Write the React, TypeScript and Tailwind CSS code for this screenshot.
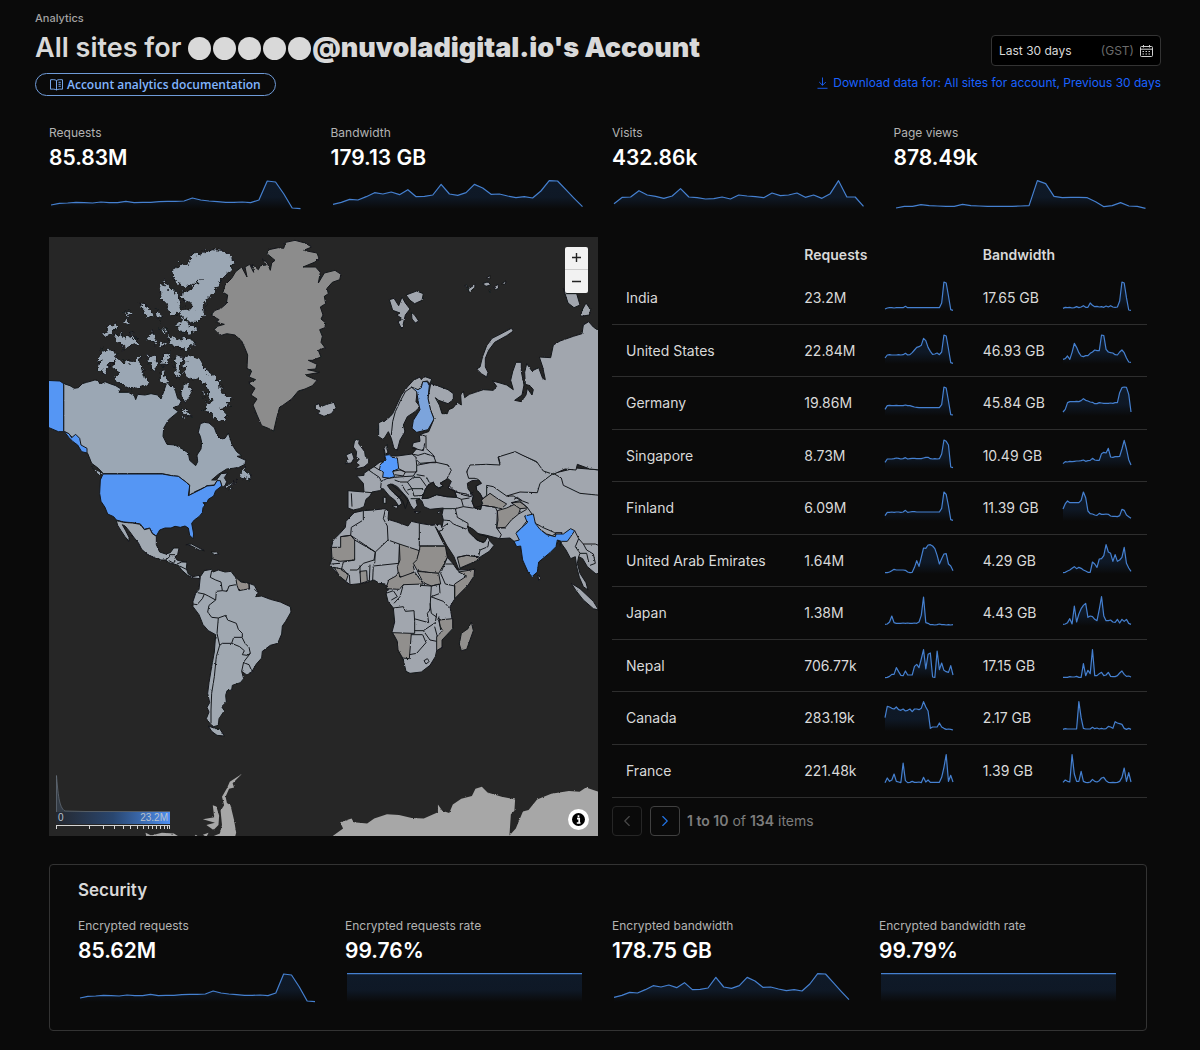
import { ChevronLeft, ChevronRight } from 'lucide-react';
import { useId } from 'react';
import type React from 'react';

interface Metric {
  label: string;
  value: string;
  points: number[];
}

interface CountryRow {
  name: string;
  requests: string;
  requestPoints: number[];
  bandwidth: string;
  bandwidthPoints: number[];
}

const REQUESTS = [12, 17, 18, 20, 19, 18, 21, 19, 19, 23, 19, 20, 20, 22, 23, 23, 24, 33, 27, 24, 22, 20, 20, 21, 19, 27, 84, 81, 45, 3, 1];
const BANDWIDTH = [14, 20, 29, 27, 37, 49, 45, 51, 43, 58, 37, 38, 42, 74, 45, 41, 49, 74, 63, 44, 45, 39, 34, 37, 33, 54, 85, 84, 58, 32, 7];
const VISITS = [16, 35, 36, 55, 42, 38, 32, 39, 61, 36, 34, 30, 31, 36, 30, 42, 39, 37, 34, 48, 40, 42, 48, 35, 42, 32, 46, 85, 36, 36, 8];
const PAGE_VIEWS = [3, 8, 8, 13, 10, 9, 8, 8, 14, 10, 9, 8, 8, 8, 8, 9, 10, 85, 76, 38, 34, 35, 35, 34, 22, 7, 10, 19, 9, 8, 2];
const RATE = Array.from({ length: 31 }, () => 85);

const SUMMARY: Metric[] = [
  { label: 'Requests', value: '85.83M', points: REQUESTS },
  { label: 'Bandwidth', value: '179.13 GB', points: BANDWIDTH },
  { label: 'Visits', value: '432.86k', points: VISITS },
  { label: 'Page views', value: '878.49k', points: PAGE_VIEWS },
];

const SECURITY: Metric[] = [
  { label: 'Encrypted requests', value: '85.62M', points: REQUESTS },
  { label: 'Encrypted requests rate', value: '99.76%', points: RATE },
  { label: 'Encrypted bandwidth', value: '178.75 GB', points: BANDWIDTH },
  { label: 'Encrypted bandwidth rate', value: '99.79%', points: RATE },
];

const COUNTRIES: CountryRow[] = [
  {
    name: 'India',
    requests: '23.2M',
    requestPoints: [6, 9, 10, 10, 9, 10, 10, 10, 10, 14, 10, 10, 10, 10, 10, 10, 10, 10, 10, 10, 10, 10, 10, 10, 10, 24, 87, 84, 45, 4, 2],
    bandwidth: '17.65 GB',
    bandwidthPoints: [8, 11, 10, 11, 9, 10, 13, 10, 12, 16, 11, 11, 24, 17, 13, 14, 12, 13, 11, 15, 12, 16, 12, 11, 12, 30, 87, 84, 40, 3, 2],
  },
  {
    name: 'United States',
    requests: '22.84M',
    requestPoints: [18, 27, 28, 27, 27, 27, 28, 27, 28, 32, 27, 28, 34, 42, 50, 52, 56, 77, 70, 50, 38, 29, 30, 33, 28, 36, 87, 84, 45, 4, 2],
    bandwidth: '46.93 GB',
    bandwidthPoints: [14, 16, 24, 14, 35, 62, 50, 34, 24, 22, 25, 25, 32, 36, 42, 40, 40, 87, 85, 44, 36, 34, 33, 28, 27, 36, 42, 34, 18, 6, 5],
  },
  {
    name: 'Germany',
    requests: '19.86M',
    requestPoints: [20, 31, 32, 31, 31, 32, 31, 31, 31, 33, 31, 31, 29, 27, 26, 25, 25, 25, 25, 25, 25, 25, 25, 25, 25, 34, 87, 84, 45, 4, 3],
    bandwidth: '45.84 GB',
    bandwidthPoints: [12, 20, 40, 43, 43, 43, 44, 43, 46, 52, 47, 45, 42, 41, 37, 37, 40, 39, 38, 38, 38, 39, 38, 40, 40, 70, 85, 87, 86, 65, 12],
  },
  {
    name: 'Singapore',
    requests: '8.73M',
    requestPoints: [20, 30, 30, 30, 31, 33, 32, 30, 31, 34, 30, 31, 32, 32, 31, 31, 31, 33, 35, 35, 31, 30, 31, 30, 31, 45, 87, 83, 72, 6, 4],
    bandwidth: '10.49 GB',
    bandwidthPoints: [16, 22, 21, 23, 22, 23, 24, 24, 25, 27, 23, 25, 26, 32, 27, 26, 26, 46, 50, 48, 62, 36, 35, 37, 37, 38, 60, 86, 60, 28, 12],
  },
  {
    name: 'Finland',
    requests: '6.09M',
    requestPoints: [16, 26, 26, 27, 26, 27, 27, 26, 27, 32, 26, 27, 28, 28, 27, 27, 27, 27, 27, 27, 27, 27, 27, 27, 27, 38, 87, 80, 45, 4, 2],
    bandwidth: '11.39 GB',
    bandwidthPoints: [36, 52, 60, 55, 55, 55, 55, 55, 62, 87, 70, 30, 22, 21, 18, 17, 23, 20, 20, 21, 20, 15, 14, 14, 13, 16, 35, 32, 18, 13, 8],
  },
  {
    name: 'United Arab Emirates',
    requests: '1.64M',
    requestPoints: [4, 4, 6, 10, 14, 12, 12, 12, 12, 11, 6, 4, 5, 20, 40, 23, 50, 78, 77, 87, 88, 84, 76, 56, 30, 46, 60, 61, 30, 24, 10],
    bandwidth: '4.29 GB',
    bandwidthPoints: [4, 5, 9, 12, 17, 22, 16, 20, 17, 12, 9, 5, 5, 36, 30, 20, 45, 46, 55, 88, 66, 62, 38, 58, 38, 42, 50, 80, 32, 18, 8],
  },
  {
    name: 'Japan',
    requests: '1.38M',
    requestPoints: [5, 6, 12, 30, 10, 8, 8, 8, 9, 8, 9, 8, 8, 9, 8, 12, 32, 87, 10, 8, 4, 4, 3, 4, 6, 4, 4, 3, 4, 3, 4],
    bandwidth: '4.43 GB',
    bandwidthPoints: [5, 6, 10, 22, 6, 60, 12, 36, 52, 62, 68, 26, 30, 28, 20, 16, 50, 88, 30, 16, 16, 18, 12, 11, 20, 9, 20, 14, 20, 8, 5],
  },
  {
    name: 'Nepal',
    requests: '706.77k',
    requestPoints: [4, 5, 8, 14, 14, 34, 22, 11, 10, 24, 12, 12, 12, 38, 44, 34, 60, 88, 30, 74, 78, 6, 5, 84, 28, 48, 26, 22, 20, 40, 12],
    bandwidth: '17.15 GB',
    bandwidthPoints: [5, 5, 5, 7, 6, 6, 8, 5, 5, 46, 10, 26, 16, 88, 10, 10, 16, 20, 10, 12, 20, 8, 7, 7, 10, 18, 24, 14, 8, 9, 6],
  },
  {
    name: 'Canada',
    requests: '283.19k',
    requestPoints: [40, 74, 72, 68, 66, 72, 64, 62, 66, 60, 62, 66, 58, 66, 66, 64, 68, 88, 72, 60, 8, 12, 12, 12, 24, 12, 8, 5, 6, 5, 3],
    bandwidth: '2.17 GB',
    bandwidthPoints: [5, 7, 6, 6, 6, 6, 6, 88, 40, 8, 6, 6, 6, 11, 7, 9, 6, 8, 6, 7, 14, 12, 8, 28, 24, 22, 20, 8, 5, 8, 5],
  },
  {
    name: 'France',
    requests: '221.48k',
    requestPoints: [4, 18, 8, 12, 30, 8, 6, 4, 63, 10, 4, 5, 8, 5, 5, 6, 4, 20, 6, 12, 5, 5, 5, 5, 5, 20, 50, 88, 8, 26, 6],
    bandwidth: '1.39 GB',
    bandwidthPoints: [5, 12, 8, 6, 88, 30, 8, 8, 38, 8, 5, 4, 6, 14, 8, 6, 10, 18, 20, 10, 5, 4, 5, 4, 5, 8, 20, 48, 8, 34, 6],
  },
];

// Points are heights on a 0-90 scale.
const Sparkline: React.FC<{ points: number[]; className: string }> = ({ points, className }) => {
  const id = useId();
  const line = points.map((p, i) => `${i * 10} ${90 - p}`).join(' L');
  const width = (points.length - 1) * 10;

  return (
    <svg viewBox={`0 0 ${width} 90`} preserveAspectRatio="none" className={className} aria-hidden="true">
      <defs>
        <linearGradient id={id} gradientUnits="userSpaceOnUse" x1="0" y1="0" x2="0" y2="90">
          <stop offset="0" stopColor="#0f1a29" />
          <stop offset="0.6" stopColor="#0f1a29" stopOpacity="0.9" />
          <stop offset="1" stopColor="#0f1a29" stopOpacity="0" />
        </linearGradient>
      </defs>
      <path d={`M${line} L${width} 90 L0 90 Z`} fill={`url(#${id})`} />
      <path d={`M${line}`} fill="none" stroke="#4580d0" strokeWidth="1.2" strokeLinejoin="round" vectorEffect="non-scaling-stroke" />
    </svg>
  );
};

const MetricCard: React.FC<{ metric: Metric }> = ({ metric }) => (
  <div>
    <div className="text-[12px] leading-5 text-[#b3b3b3]">{metric.label}</div>
    <div className="mt-px text-[21px] leading-7 font-semibold text-white">{metric.value}</div>
    <div className="mt-[7px] px-0.5">
      <Sparkline points={metric.points} className="block h-[30px] w-full overflow-visible" />
    </div>
  </div>
);

const CANADA = [
  'M56 446L75 452 88 460 100 458 112 446 125 442 140 438 152 434 168 446 180 440 195 446 212 452 228 462 222 472 250 472 268 482 272 494 278 478 300 480 318 476 338 480 348 492 356 470 362 452 366 442 378 456 384 450 392 470 398 490 410 496 402 512 384 518 400 530 388 540 370 555 356 580 354 604 366 628 390 630 412 642 430 654 434 676 452 692 458 680 456 660 468 642 470 622 466 604 460 592 466 566 478 562 492 564 508 578 516 600 528 612 540 610 550 594 562 630 575 650 590 662 576 664 602 676 600 688 580 698 545 702 520 718 500 735 515 735 528 716 548 714 538 728 545 740 540 752 532 756 526 740 516 738 508 750 486 752 468 762 450 770 432 782 434 750 424 742 400 724 380 722 352 716 175 716 160 700 140 685 128 655 110 640 95 620 80 605 64 592 56 590Z',
];

const ARCTIC = [
  'M378 110L400 98 402 84 428 94 440 60 470 52 500 44 530 46 556 62 568 82 556 108 530 130 520 150 500 180 480 200 476 240 456 262 440 262 410 250 402 230 420 220 446 218 430 200 408 190 412 170 440 162 466 134 440 156 400 150 386 130Z',
  'M362 134L376 160 394 172 404 196 412 226 398 238 376 240 364 206 348 190 346 160Z',
  'M392 270L410 262 414 244 430 268 456 276 458 290 430 294 404 290Z',
  'M366 288L378 304 400 316 420 310 440 312 448 328 432 342 400 340 378 330Z',
  'M344 278L364 288 360 298Z M348 318L362 322 354 338 344 332Z',
  'M208 300L228 296 240 312 258 306 260 288 270 312 282 324 258 332 236 344 236 328 214 322Z',
  'M302 306L316 302 326 290 334 310 330 330 314 318Z',
  'M176 300L192 276 216 264 214 280 200 296 184 306Z',
  'M236 234L252 226 258 236 244 244Z M236 254L252 248 250 260 240 264Z',
  'M284 208L300 212 320 226 324 246 310 250 296 228Z M334 226L350 240 346 256 336 248Z',
  'M168 346L186 342 216 358 206 376 192 390 180 414 164 406 158 390 166 366Z',
  'M204 378L214 366 228 380 240 380 262 382 284 360 282 380 294 404 302 436 312 446 290 456 256 462 232 450 206 430 222 412 204 398Z',
  'M308 370L322 362 338 366 336 390 326 408 314 394 320 380Z',
  'M352 360L378 354 370 382 354 392Z M346 412L354 404 362 420 368 440 356 448 346 438Z',
  'M392 368L408 362 416 370 404 390 402 412 418 420 436 436 452 430 470 436 484 456 494 484 504 500 480 502 482 520 466 524 490 530 520 552 536 560 546 540 528 520 560 514 548 500 562 494 548 480 530 476 526 440 500 420 478 404 466 372 440 362 420 364 418 400 396 430 388 404Z',
  'M418 448L432 444 438 470 430 494 414 498 406 478Z M410 520L426 524 440 544 424 540 414 546Z M470 470L482 474 478 486 468 482Z',
  'M590 706L602 690 600 708 614 716 620 732 586 726Z M142 698L172 716 176 726 152 712Z M540 758L552 748 574 742 560 754 542 762Z',
];

const GREENLAND =
  'M498 240L510 226 528 220 544 206 548 180 534 172 540 150 560 130 572 110 590 96 606 126 600 96 614 88 626 112 622 88 640 104 646 92 664 90 652 72 666 82 676 106 680 84 690 76 666 56 672 44 700 38 716 40 722 22 750 16 780 24 800 36 776 46 816 54 822 70 808 82 774 96 812 96 826 112 820 144 838 114 870 106 888 118 884 134 862 142 846 160 850 176 838 184 842 206 826 216 834 240 828 252 842 264 840 278 824 284 832 304 828 322 840 338 820 346 828 366 802 376 790 376 816 388 812 402 788 404 824 412 780 420 816 436 802 452 780 462 760 468 740 492 712 512 704 516 696 545 686 588 670 580 650 572 636 540 624 510 636 492 618 480 630 460 610 444 632 434 612 426 620 408 606 400 608 360 600 340 590 318 570 300 545 296 526 302 508 284 516 274 538 268 514 262 522 254Z';

const US = [
  'M0 436L45 438 56 446 56 590 40 590 12 578 0 575Z',
  'M58 590L72 596 80 608 92 598 104 610 108 630 126 640 126 654 110 650 98 630 84 620 72 608Z',
  'M174 717L352 717 380 722 400 724 424 742 434 752 430 782 450 772 468 763 486 753 508 751 516 737 526 737 530 753 512 767 506 783 490 793 486 803 474 803 480 810 474 818 472 833 462 845 448 855 440 865 446 897 444 911 434 901 430 879 420 873 406 877 390 874 378 879 360 879 344 885 334 903 322 895 314 879 298 883 286 867 262 863 236 861 214 855 206 845 188 837 180 817 168 799 164 775 166 735Z',
];

const AMERICAS = [
  'M214 182L236 187 262 189 286 193 298 209 314 205 322 221 334 229 334 254 344 276 362 282 376 278 386 264 402 264 398 284 390 290 396 300 410 304 426 306 424 326 430 342 444 350 462 346 466 356 446 354 428 346 410 330 400 316 386 312 372 308 362 300 348 300 330 294 306 282 290 268 280 248 268 234 252 212 240 198 232 194 242 212 252 232 252 244 240 230 228 212 218 196Z',
  'M422 254L440 252 458 262 478 272 462 270 440 258Z M498 276L512 276 522 282 508 284Z',
  'M466 350L478 332 500 328 504 336 520 330 540 336 558 334 570 350 590 366 612 370 628 376 640 398 632 410 650 408 676 418 706 426 736 440 738 456 722 484 712 498 710 522 698 550 676 556 652 574 650 594 634 612 620 636 604 644 590 634 596 656 586 668 562 676 560 690 546 692 542 706 544 726 530 740 538 752 522 776 520 796 506 800 496 792 484 776 492 756 486 742 494 728 488 700 492 668 500 620 508 576 512 524 490 512 474 494 462 464 444 440 444 424 452 400 462 388Z',
  'M490 798L512 806 524 806 538 828 516 826 500 814Z',
];

const AMERICAS_BORDERS =
  'M500 332L496 352 512 360 528 366 532 392 514 394 512 420 490 408 478 402 458 398M532 392L546 394 552 378 572 374M478 402L472 416 456 434 444 432M512 420L492 436 488 456 500 472 520 474 542 466 548 480 574 490 580 508 592 520 592 532 566 532 560 550 532 550 524 556 516 520 520 474M560 550L584 560 598 572 592 584 606 586 616 580 612 562 600 550 592 534M596 608L612 614 620 632M616 580L596 606 590 634M524 556L514 590 508 650 500 700 498 750 498 790M362 300L374 290 374 284 390 284M372 302L386 310 390 300M396 312L410 306 426 306M404 318L424 328M612 370L612 388M628 388L640 398';

const RUSSIA =
  'M332 446L352 452 384 464 400 476 400 494 384 506 356 496 346 488 358 510 366 536 382 536 386 524 400 518 412 502 424 510 422 480 430 468 434 488 448 478 466 472 490 464 520 466 530 454 518 438 540 444 560 450 580 464 572 436 578 410 588 382 604 382 604 410 612 450 606 480 584 496 604 500 618 480 622 460 636 480 640 464 630 452 616 448 614 412 620 386 636 408 656 398 668 430 676 434 668 396 658 366 692 368 700 330 720 318 760 304 786 296 790 270 806 260 820 276 840 290 840 705 810 702 772 688 768 705 735 702 700 718 670 708 650 680 606 660 586 650 534 666 540 690 500 688 450 690 440 710 446 730 470 730 480 740 450 750 454 785 430 780 400 765 376 740 394 706 384 690 348 682 340 660 318 640 318 604 300 598 326 590 342 552 330 520 324 490Z';

const NORTH_ISLANDS = [
  'M208 194L222 190 236 212 246 186 256 204 270 222 256 240 246 284 234 260 248 252 230 240 240 234 218 226Z',
  'M258 180L290 168 310 176 306 196 284 206 270 196Z M274 232L284 240 296 258 286 264 276 252Z',
  'M434 152L444 158 440 150Z M444 162L466 148 464 158 448 172Z M488 146L504 140 512 150 498 154Z M500 128L510 122 510 132Z M522 156L534 148 536 160 526 164Z M544 146L558 138 556 148Z M506 166L512 166 510 172Z',
  'M480 396L470 402 484 416 500 426 504 412 496 396 496 370 506 346 524 322 560 302 580 288 574 280 540 298 516 310 500 332 488 364Z',
  'M730 160L740 176 770 176 780 210 762 218 744 204Z M786 226L798 204 812 224 808 240 782 244Z',
  'M-14 510L-2 506 0 516 20 508 42 502 48 518 34 536 12 544 -6 536 0 528 -14 522Z',
  'M104 616L118 614 116 626 122 634 134 650 136 664 146 672 146 684 132 696 106 702 118 690 108 684 118 672 108 666 110 650 100 636Z',
  'M78 660L96 652 102 670 94 684 76 686 84 674Z M192 640L202 628 200 640 204 652 196 658Z',
];

const SCANDINAVIA =
  'M176 568L184 556 192 560 210 545 218 536 230 510 244 480 262 456 280 436 300 426 304 434 312 424 335 432 330 446 322 438 310 440 300 460 292 466 288 500 300 515 285 530 262 545 250 570 255 590 240 615 232 645 222 640 214 610 205 590 190 614 176 605Z';

const EURASIA =
  'M84 152L132 156 130 130 110 108 132 106 132 100 146 90 162 80 180 66 196 66 192 28 202 14 202 34 198 44 208 42 216 48 232 48 276 42 290 26 276 20 280 8 300 4 298 -14 318 -16 342 40 400 90 440 100 446 70 500 66 540 70 534 44 586 34 650 66 700 100 768 84 840 90 840 398 828 402 802 380 788 356 776 350 772 370 780 400 798 428 804 450 790 440 778 412 770 380 766 350 752 356 738 330 728 316 716 300 706 320 690 338 656 366 650 392 636 410 624 396 608 360 602 318 590 320 582 304 570 294 538 296 500 286 470 280 450 262 444 270 470 300 490 308 504 290 510 304 522 316 508 334 482 350 450 372 416 388 402 350 380 316 362 282 350 262 366 262 370 240 366 224 370 204 330 208 312 200 306 184 300 178 288 180 292 196 282 210 272 196 262 174 250 160 232 140 216 132 206 136 222 160 240 176 246 190 236 198 224 180 208 168 190 146 178 152 156 156 150 168 138 178 132 200 118 206 100 210 84 204Z';

const SEAS = [
  'M306 176L316 148 326 134 340 126 344 136 356 144 370 138 360 130 384 116 394 124 384 144 404 154 410 172 380 170 350 164 326 174Z',
  'M442 130L456 122 476 120 484 130 468 138 470 150 480 160 488 176 482 208 464 204 456 184 460 168 444 146Z',
  'M442 258L460 268 478 284 502 290 494 306 480 304 462 292 448 278Z',
  'M202 136L212 132 236 150 254 168 264 184 256 206 248 182 226 162 212 150Z',
];

const EURASIA_BORDERS =
  'M94 160L96 200M132 156L156 158M146 90L160 100 178 112 184 124 182 144 190 148M162 80L178 90M184 124L200 116 224 112M236 86L256 96 290 96 290 76 288 52 276 42M218 94L240 90 256 96 250 108 224 104M224 112L250 110 280 108 290 92M224 120L240 126 262 126 280 112 300 112 320 140M262 126L276 146 312 146M262 150L276 146 282 168 312 166M244 132L256 152 266 164M290 76L330 68 348 68M276 42L294 46 314 40 344 50M276 24L310 32 314 10M290 60L300 70 348 66M232 176L244 166M320 112L328 128M314 108L290 104M272 176L300 176M404 156L440 162 448 170M410 172L424 178 430 200 458 204M424 178L448 174M370 206L406 206 430 200 M406 206L412 232 444 250 444 262M370 240L390 242 400 252 440 268M370 260L384 250M458 204L490 196 526 202 532 214 530 264 544 284 538 296M500 136L500 166 484 180M500 136L520 140 560 168 580 168 600 180 626 190M450 162L460 156M560 168L600 156 652 158 660 130 700 100 724 114 730 136 780 160 840 166M574 188L600 186 620 200 636 222 606 262 588 278M596 222L620 208M558 264L532 264M646 250L672 264 700 276 708 282M660 268L680 282 706 290M764 272L776 296 790 312 826 312 840 318M776 296L766 320 780 340 776 350M790 312L800 330 820 342 826 370 810 376M780 340L800 340 806 366M708 300L722 304 720 320M412 352L440 346 476 350 480 330 504 320 506 304M582 178L592 172 606 182';

const SCANDINAVIA_BORDER = 'M276 456L256 470 240 500 226 530 218 560 214 600';

const AFRICA =
  'M102 218L130 212 160 210 196 206 206 214 204 238 230 246 264 258 274 244 300 250 336 256 362 252 368 270 356 274 346 260 360 290 376 320 382 352 400 372 412 390 464 388 462 408 444 436 420 458 402 480 390 500 396 536 398 566 380 586 362 602 366 622 350 632 346 650 330 676 304 696 270 700 258 694 250 660 236 634 232 604 216 576 224 546 220 504 204 484 198 460 206 448 196 432 178 430 162 420 130 430 90 434 64 414 46 394 30 374 36 356 34 322 40 300 60 280 76 262 78 244Z';

const NO_DATA = [
  'M34 322L62 322 62 290 92 286 104 300 104 360 60 364 36 356Z',
  'M238 312L298 332 290 366 280 380 284 394 254 412 236 408 232 380 240 360Z',
  'M300 318L376 318 382 352 370 376 356 400 330 398 292 392 280 370 290 360 298 332Z',
  'M198 446L206 420 228 408 236 396 240 412 284 396 310 432 250 434 238 448Z',
  'M292 394L356 400 362 432 334 438 310 428Z',
  'M218 578L274 580 268 656 248 654 234 630 232 604Z',
  'M356 540L398 536 398 566 366 600 366 622 350 632 350 590 368 572 360 558Z',
  'M404 432L440 408 416 396 464 388 462 408 444 436 404 476Z',
  'M42 382L70 388 84 406 78 424 60 410Z M120 394L140 392 142 424 122 430Z',
  'M454 546L460 572 440 628 424 632 418 612 424 580 444 566Z',
  'M484 180L510 160 530 174 560 192 544 206 526 202 490 196Z',
  'M532 212L560 204 590 190 604 196 596 222 574 240 556 262 530 264 534 240Z',
  'M574 188L600 182 622 204 600 206Z M706 278L726 278 722 286 708 286Z',
  'M412 352L440 346 470 350 480 358 420 384Z',
];

const AFRICA_BORDERS =
  'M196 208L190 236 202 258 204 300 166 336 92 286 94 262 130 240 130 212M62 290L92 286M104 360L70 366 64 390 88 404 90 434M104 300L166 336 162 360 130 370 112 390 90 390M204 300L238 312M238 320L236 370 160 378 158 420M298 250L298 318 376 318M166 336L164 370M150 374L148 424M120 376L120 400M34 372L60 370M220 504L250 500 256 514 282 512 284 544 284 580 274 580M250 434L240 470 222 490M300 436L334 438 332 470 330 510 322 520 326 548 282 536M334 438L358 432 360 460 334 470M332 470L370 484 388 504M330 490L334 520 362 540M284 572L310 572 346 548 350 520M310 572L330 600 350 604M274 584L308 584 318 608 290 640 268 644M382 352L362 400 376 432 404 438 404 476M376 372L400 372 418 396M198 460L220 452 232 470 214 480M344 560L352 590M356 530L362 570';

const SMALL_ISLANDS = [
  'M654 404L662 414 656 422Z',
  'M754 430L780 446 820 484 836 510 820 506 790 480 768 452Z',
  'M190 172L198 172 198 190 190 190Z M216 198L234 196 230 206Z M282 214L302 216 290 220Z M352 216L364 212 356 222Z',
  'M312 662L322 656 328 664 318 672Z',
];

const ANTARCTICA = [
  'M284 262L300 270 330 262 364 264 380 274 410 286 426 268 440 278 470 274 494 264 500 240 496 200 506 184 500 160 514 136 522 118 556 96 530 122 534 134 520 138 510 160 514 178 524 184 534 226 540 262 532 292 290 292Z',
  'M474 184L484 188 492 214 490 240 476 254 456 240 480 234 446 224 478 218Z M446 268L462 262 456 274Z M136 274L152 288 144 288Z M166 280L178 284 168 284Z',
  'M808 275L842 250 834 232 866 222 872 232 910 236 930 222 966 210 1000 212 1036 220 1070 222 1110 204 1110 182 1122 200 1142 206 1152 182 1176 166 1206 158 1216 138 1234 132 1250 148 1290 160 1328 168 1326 200 1316 210 1312 270 1330 250 1350 202 1366 198 1390 168 1430 152 1480 144 1510 146 1528 134 1570 148 1570 292 812 292Z',
];

const Country: React.FC<{ shapes: string[]; fill: string }> = ({ shapes, fill }) => (
  <g fill={fill}>
    {shapes.map(d => (
      <path key={d} d={d} />
    ))}
  </g>
);

const WorldMap = () => (
  <svg viewBox="12 6 1647 1797" className="block w-full" role="img" aria-label="Requests by country">
    <defs>
      <filter id="coast" x="-5%" y="-5%" width="110%" height="110%">
        <feTurbulence type="fractalNoise" baseFrequency="0.16" numOctaves="2" seed="4" />
        <feDisplacementMap in="SourceGraphic" scale="6" xChannelSelector="R" yChannelSelector="G" />
      </filter>
      <filter id="fjords" x="-5%" y="-5%" width="110%" height="110%">
        <feTurbulence type="fractalNoise" baseFrequency="0.07" numOctaves="3" seed="9" />
        <feDisplacementMap in="SourceGraphic" scale="28" xChannelSelector="R" yChannelSelector="G" />
      </filter>
    </defs>
    <rect x="12" y="6" width="1647" height="1797" fill="#262626" />
    <g stroke="#14171b" strokeWidth="3" strokeLinejoin="round">
      <g filter="url(#coast)">
        <Country shapes={CANADA} fill="#9ba7b4" />
        <Country shapes={[GREENLAND]} fill="#8c8c8c" />
      </g>
      <g filter="url(#fjords)">
        <Country shapes={ARCTIC} fill="#9ba7b4" />
      </g>
      <Country shapes={US} fill="#5596f4" />
      <g transform="translate(0 675)" filter="url(#coast)">
        <Country shapes={AMERICAS} fill="#a0a8b1" />
        <Country shapes={['M572 352L588 366 612 370 614 386 582 392 576 376Z']} fill="#948f8b" />
        <path d={AMERICAS_BORDERS} fill="none" />
      </g>
      <g transform="translate(825 615)">
        <Country shapes={[EURASIA]} fill="#a1a6ae" />
        <Country shapes={SEAS} fill="#262626" />
      </g>
      <g transform="translate(825 0)" filter="url(#coast)">
        <Country shapes={[RUSSIA, SCANDINAVIA, ...NORTH_ISLANDS]} fill="#a1a6ae" />
        <path d={SCANDINAVIA_BORDER} fill="none" />
        <path
          d="M274 456L294 464 304 458 308 440 322 440 328 452 324 490 332 526 342 552 324 584 290 592 276 580 280 556 300 524 296 506 290 470Z"
          fill="#7ba4dc"
        />
      </g>
      <g transform="translate(825 615)" filter="url(#coast)">
        <path d={SEAS[0]} fill="#262626" />
        <path d={SEAS[1]} fill="#262626" />
        <Country shapes={[AFRICA]} fill="#a1a6ae" />
        <Country shapes={NO_DATA} fill="#918f8d" />
        <path d={`${EURASIA_BORDERS}${AFRICA_BORDERS}`} fill="none" />
        <Country shapes={SMALL_ISLANDS} fill="#a1a6ae" />
        <path
          d="M614 228L640 222 646 250 660 268 680 284 706 290 708 282 730 282 752 266 764 272 752 290 742 304 724 304 712 300 708 320 690 338 656 366 652 396 636 410 624 396 608 360 602 318 590 320 582 304 598 300 588 280 606 262 622 248Z"
          fill="#5197f7"
        />
        <path
          d="M182 72L198 60 194 46 208 44 216 52 232 54 236 86 218 94 224 110 208 114 188 112 190 96 178 90Z"
          fill="#5599fb"
        />
      </g>
      <g transform="translate(0 1515) scale(1.062)" stroke="none" filter="url(#coast)">
        <Country shapes={ANTARCTICA} fill="#a7a7a7" />
      </g>
    </g>
  </svg>
);

const TICKS = [0, 33, 47, 58, 67, 74, 81, 87, 92, 96, 100, 104, 108, 111, 113];

const MapLegend = () => (
  <div className="absolute bottom-[6px] left-[7px] w-[114px]">
    <svg viewBox="0 0 114 37" className="block w-full" aria-hidden="true">
      <path d="M0.5 37V0.5C2 18 3 33 9 36L30 36.5H114" fill="#333b45" stroke="#69727e" strokeWidth="0.7" />
    </svg>
    <div className="flex h-3 items-center justify-between bg-linear-to-r from-[#242830] via-[#29466f] to-[#4d8ff2] px-0.5 font-['Liberation_Sans',sans-serif] text-[10px] leading-3 text-[#b9c2cd]">
      <span>0</span>
      <span>23.2M</span>
    </div>
    <svg viewBox="0 0 114 6" className="block w-full" aria-hidden="true">
      <path d={`M0 1.5H114${TICKS.map(x => `M${x + 0.5} 1V5`).join('')}`} stroke="#d5d5d5" strokeWidth="1" />
    </svg>
  </div>
);

const BookIcon = () => (
  <svg viewBox="0 0 13 12" className="h-3 w-[13px] shrink-0" fill="none" stroke="currentColor" strokeWidth="0.9" aria-hidden="true">
    <path d="M6.5 1.5C5 .5 2.5 .5 .5 .8V10.2C2.5 10 5 10 6.5 11C8 10 10.5 10 12.5 10.2V.8C10.5 .5 8 .5 6.5 1.5V11" />
    <path d="M8.5 3.3H10.8M8.5 5.3H10.8M8.5 7.3H10.8" />
  </svg>
);

const CalendarIcon = () => (
  <svg viewBox="0 0 13 12" className="h-3 w-[13px]" fill="none" stroke="#d0d0d0" aria-hidden="true">
    <rect x="0.5" y="1.5" width="12" height="10" rx="1" />
    <path d="M.5 4.2H12.5M3.5 0V2.5M9.5 0V2.5" />
    <path d="M2.5 6.5H10.5M2.5 9H10.5" strokeDasharray="1.5 1.5" />
  </svg>
);

const DownloadIcon = () => (
  <svg viewBox="0 0 11 12" className="h-3 w-[11px]" fill="none" stroke="currentColor" strokeWidth="0.9" aria-hidden="true">
    <path d="M5.5 .5V8.2M2.2 5L5.5 8.3L8.8 5M.5 11.3H10.5" />
  </svg>
);

const App = () => (
  <main className="min-h-screen bg-[#0a0a0a] pt-2.5 pr-[39px] pb-5 pl-[35px] font-[Inter,sans-serif] text-[#d9d9d9]">
    <header className="flex justify-between">
      <div>
        <div className="text-[11px] leading-4 font-medium text-[#a3a3a3]">Analytics</div>
        <h1 className="mt-1 flex items-center text-[27px] leading-9 font-semibold">
          <span className="whitespace-pre">All sites for </span>
          <span className="mr-px flex gap-0.5" aria-label="hidden name">
            {[0, 1, 2, 3, 4].map(i => (
              <span key={i} className="size-[23px] rounded-full bg-[#d9d9d9]" />
            ))}
          </span>
          <span className="font-black">@nuvoladigital.io's Account</span>
        </h1>
        <a
          href="#docs"
          className="mt-[7px] inline-flex h-[23px] items-center gap-1 rounded-full border border-[#6f9bd8] px-3.5 font-['Open_Sans',sans-serif] text-[12px] font-semibold text-[#82b6ff]">
          <BookIcon />
          Account analytics documentation
        </a>
      </div>
      <div className="flex flex-col items-end pt-[25px]">
        <button
          type="button"
          className="flex h-[31px] w-[170px] items-center rounded border border-[#333] bg-black px-[7px] text-[12px] text-[#d9d9d9]">
          <span className="grow text-left">Last 30 days</span>
          <span className="mr-1.5 text-[#6b6b6b]">(GST)</span>
          <CalendarIcon />
        </button>
        <a href="#download" className="mt-[7px] flex items-center gap-[5px] text-[12px] leading-5 text-[#1a62ff]">
          <DownloadIcon />
          Download data for: All sites for account, Previous 30 days
        </a>
      </div>
    </header>

    <section className="mt-[26px] grid grid-cols-4 gap-7 px-3.5">
      {SUMMARY.map(metric => (
        <MetricCard key={metric.label} metric={metric} />
      ))}
    </section>

    <section className="mt-7 grid grid-cols-2">
      <div className="relative ml-3.5 self-start">
        <WorldMap />
        <div className="absolute top-2.5 right-2.5 w-[23px] divide-y divide-[#ccc] overflow-hidden rounded-xs bg-[#f2f2f2] text-[#222]">
          <button type="button" aria-label="Zoom in" className="flex h-[23px] w-full items-center justify-center">
            <svg viewBox="0 0 9 9" className="size-[9px]" stroke="currentColor" strokeWidth="1.4">
              <path d="M0 4.5H9M4.5 0V9" />
            </svg>
          </button>
          <button type="button" aria-label="Zoom out" className="flex h-[23px] w-full items-center justify-center">
            <svg viewBox="0 0 9 9" className="size-[9px]" stroke="currentColor" strokeWidth="1.4">
              <path d="M0 4.5H9" />
            </svg>
          </button>
        </div>
        <MapLegend />
        <button
          type="button"
          aria-label="Map information"
          className="absolute right-[9px] bottom-1.5 flex size-[21px] items-center justify-center rounded-full bg-white">
          <svg viewBox="0 0 13 13" className="size-[13px]">
            <circle cx="6.5" cy="6.5" r="6.5" fill="#000" />
            <path d="M6.5 2.3V4.2M5 5.7H7.2V10M4.8 10H8.5" stroke="#fff" strokeWidth="1.7" />
          </svg>
        </button>
      </div>

      <div className="flex flex-col px-3.5">
        <div className="grow">
          <table className="h-full w-full table-fixed text-left text-[14px] leading-5">
            <thead>
              <tr className="h-[36px]">
                <th aria-label="Country" />
                <th className="px-3.5 font-semibold">Requests</th>
                <th className="px-3.5 font-semibold">Bandwidth</th>
              </tr>
            </thead>
            <tbody>
              {COUNTRIES.map(row => (
                <tr key={row.name} className="border-b border-[#2e2e2e]">
                  <td className="px-3.5 whitespace-nowrap">{row.name}</td>
                  <td className="px-3.5">
                    <div className="flex items-center justify-between">
                      {row.requests}
                      <Sparkline points={row.requestPoints} className="mr-0.5 mb-1 h-[30px] w-[68px] overflow-visible" />
                    </div>
                  </td>
                  <td className="px-3.5">
                    <div className="flex items-center justify-between">
                      {row.bandwidth}
                      <Sparkline points={row.bandwidthPoints} className="mr-0.5 mb-1 h-[30px] w-[68px] overflow-visible" />
                    </div>
                  </td>
                </tr>
              ))}
            </tbody>
          </table>
        </div>
        <nav className="mt-2 flex items-center text-[14px] leading-5 text-[#7d7d7d]" aria-label="Pagination">
          <button
            type="button"
            disabled
            aria-label="Previous page"
            className="flex size-[30px] items-center justify-center rounded border border-[#262626] text-[#4a4a4a]">
            <ChevronLeft size={18} strokeWidth={1.5} />
          </button>
          <button
            type="button"
            aria-label="Next page"
            className="ml-2 flex size-[30px] items-center justify-center rounded border border-[#404040] text-[#2274e5]">
            <ChevronRight size={18} strokeWidth={1.5} />
          </button>
          <p className="ml-[7px]">
            <b className="font-semibold">1 to 10</b> of <b className="font-semibold">134</b> items
          </p>
        </nav>
      </div>
    </section>

    <section className="mx-3.5 mt-7 rounded border border-[#333] px-7 pt-[13px] pb-7">
      <h2 className="text-[17px] leading-6 font-semibold">Security</h2>
      <div className="mt-3.5 grid grid-cols-4 gap-7">
        {SECURITY.map(metric => (
          <MetricCard key={metric.label} metric={metric} />
        ))}
      </div>
    </section>
  </main>
);

export default App;
